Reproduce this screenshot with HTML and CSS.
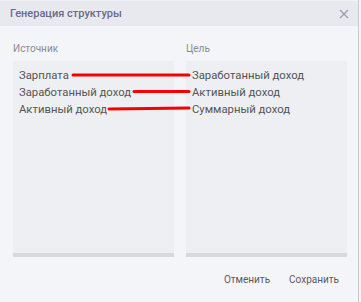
FILE: index.html
```html
<!DOCTYPE html>
<html lang="ru">
<head>
    <meta charset="UTF-8">
    <title>Генерация структуры</title>
    <link rel="stylesheet" href="styles.css">
</head>
<body>
    <div class="dialog">
        <header class="dialog-header">
            <span class="dialog-title">Генерация структуры</span>
            <svg class="close" width="10" height="10" viewBox="0 0 10 10">
                <path d="M1 1 L9 9 M9 1 L1 9" stroke="#9a9aae" stroke-width="1.2" fill="none"/>
            </svg>
        </header>

        <div class="dialog-body">
            <div class="columns">
                <div class="column">
                    <div class="column-label">Источник</div>
                    <ul class="list">
                        <li>Зарплата</li>
                        <li>Заработанный доход</li>
                        <li>Активный доход</li>
                    </ul>
                </div>
                <div class="column">
                    <div class="column-label">Цель</div>
                    <ul class="list">
                        <li>Заработанный доход</li>
                        <li>Активный доход</li>
                        <li>Суммарный доход</li>
                    </ul>
                </div>

                <!-- связи источник -> цель -->
                <svg class="links" width="334" height="70" viewBox="0 0 334 70">
                    <line x1="60" y1="14" x2="176" y2="14" />
                    <line x1="121" y1="30.5" x2="176" y2="30.5" />
                    <line x1="96" y1="48" x2="176" y2="47" />
                </svg>
            </div>
        </div>

        <footer class="dialog-footer">
            <button type="button">Отменить</button>
            <button type="button">Сохранить</button>
        </footer>
    </div>
</body>
</html>
```

FILE: styles.css
```css
body {
    margin: 0;
    padding: 0;
    background-color: #f4f5f8;
    font-family: Roboto, "Liberation Sans", sans-serif;
}

.dialog {
    width: 358px;
    height: 302px;
    border-right: 1px solid #c9cad0;
    background-color: #f4f5f8;
    display: flex;
    flex-direction: column;
}

.dialog-header {
    height: 26px;
    display: flex;
    align-items: center;
    justify-content: space-between;
    padding: 0 9px 0 10px;
    background-color: #e8e9ee;
    border-top: 1px solid #f2f2f5;
    box-sizing: border-box;
}

.dialog-title {
    font-size: 11px;
    font-weight: 500;
    color: #6a6a88;
}

.close {
    display: block;
}

.dialog-body {
    padding: 16px 11px 0 13px;
}

.columns {
    position: relative;
    display: grid;
    grid-template-columns: 161px 161px;
    gap: 12px;
}

.column-label {
    font-size: 10px;
    color: #8a8a94;
    line-height: 13px;
    margin-bottom: 6px;
}

.list {
    list-style: none;
    margin: 0;
    padding: 6px 6px 0;
    height: 186px;
    background-color: #eeeff2;
    border-bottom: 4px solid #d8d9dd;
}

.list li {
    font-size: 11.3px;
    line-height: 17px;
    color: #555;
}

.links {
    position: absolute;
    left: 0;
    top: 19px;
}

.links line {
    stroke: #f50000;
    stroke-width: 3;
    stroke-linecap: round;
}

.dialog-footer {
    display: flex;
    justify-content: flex-end;
    gap: 19px;
    padding: 17px 19px 0 0;
}

.dialog-footer button {
    border: none;
    background: none;
    padding: 0;
    font-family: inherit;
    font-size: 10px;
    line-height: 12px;
    color: #5a5a62;
    cursor: pointer;
}
```
